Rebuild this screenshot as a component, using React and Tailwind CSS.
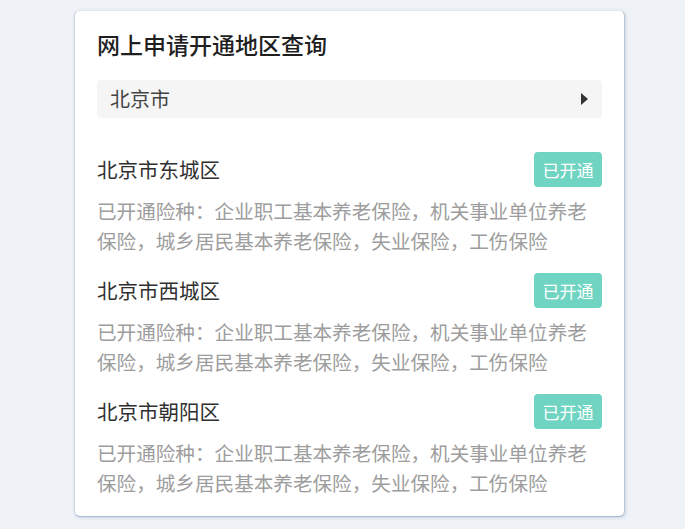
export default function App() {
  const items = ["北京市东城区", "北京市西城区", "北京市朝阳区"];
  return (
    <div
      className="flex w-[695px] h-[529px] bg-[#eff2f6] overflow-hidden"
      style={{ fontFamily: '"Noto Sans CJK SC", "Noto Sans", sans-serif' }}
    >
      <div className="w-[685px] pl-[74px] pt-[10px]">
        <div className="w-[551px] h-[507px] bg-white rounded-[6px] border border-[#dfe6ee] border-b-[#a9bccf] border-r-[#b7c7d7] border-l-[#c9d6e3] shadow-[1px_1px_3px_rgba(150,180,210,0.45)] px-[22px] pt-[17px]">
          <div className="text-[23px] leading-[32px] font-medium text-[#1f1f1f]">
            网上申请开通地区查询
          </div>
          <div className="mt-[20px] h-[38px] rounded-[4px] bg-[#f5f5f5] flex items-center justify-between pl-[13px] pr-[14px]">
            <span className="text-[20px] text-[#444]">北京市</span>
            <svg width="7" height="12" viewBox="0 0 7 12">
              <path d="M0 0 L7 6 L0 12 Z" fill="#333" />
            </svg>
          </div>
          <div className="mt-[34px] flex flex-col gap-[18px]">
            {items.map((name) => (
              <div key={name}>
                <div className="flex items-center justify-between h-[35px]">
                  <span className="text-[20.5px] text-[#303030]">{name}</span>
                  <span className="w-[68px] h-[35px] rounded-[4px] bg-[#70d4c2] text-white text-[17px] flex items-center justify-center">
                    已开通
                  </span>
                </div>
                <div className="mt-[9px] text-[19.6px] leading-[29.5px] text-[#9d9d9d]">
                  <div className="whitespace-nowrap">已开通险种：企业职工基本养老保险，机关事业单位养老</div>
                  <div className="whitespace-nowrap">保险，城乡居民基本养老保险，失业保险，工伤保险</div>
                </div>
              </div>
            ))}
          </div>
        </div>
      </div>
      <div className="w-[10px] h-full bg-white" />
    </div>
  );
}
